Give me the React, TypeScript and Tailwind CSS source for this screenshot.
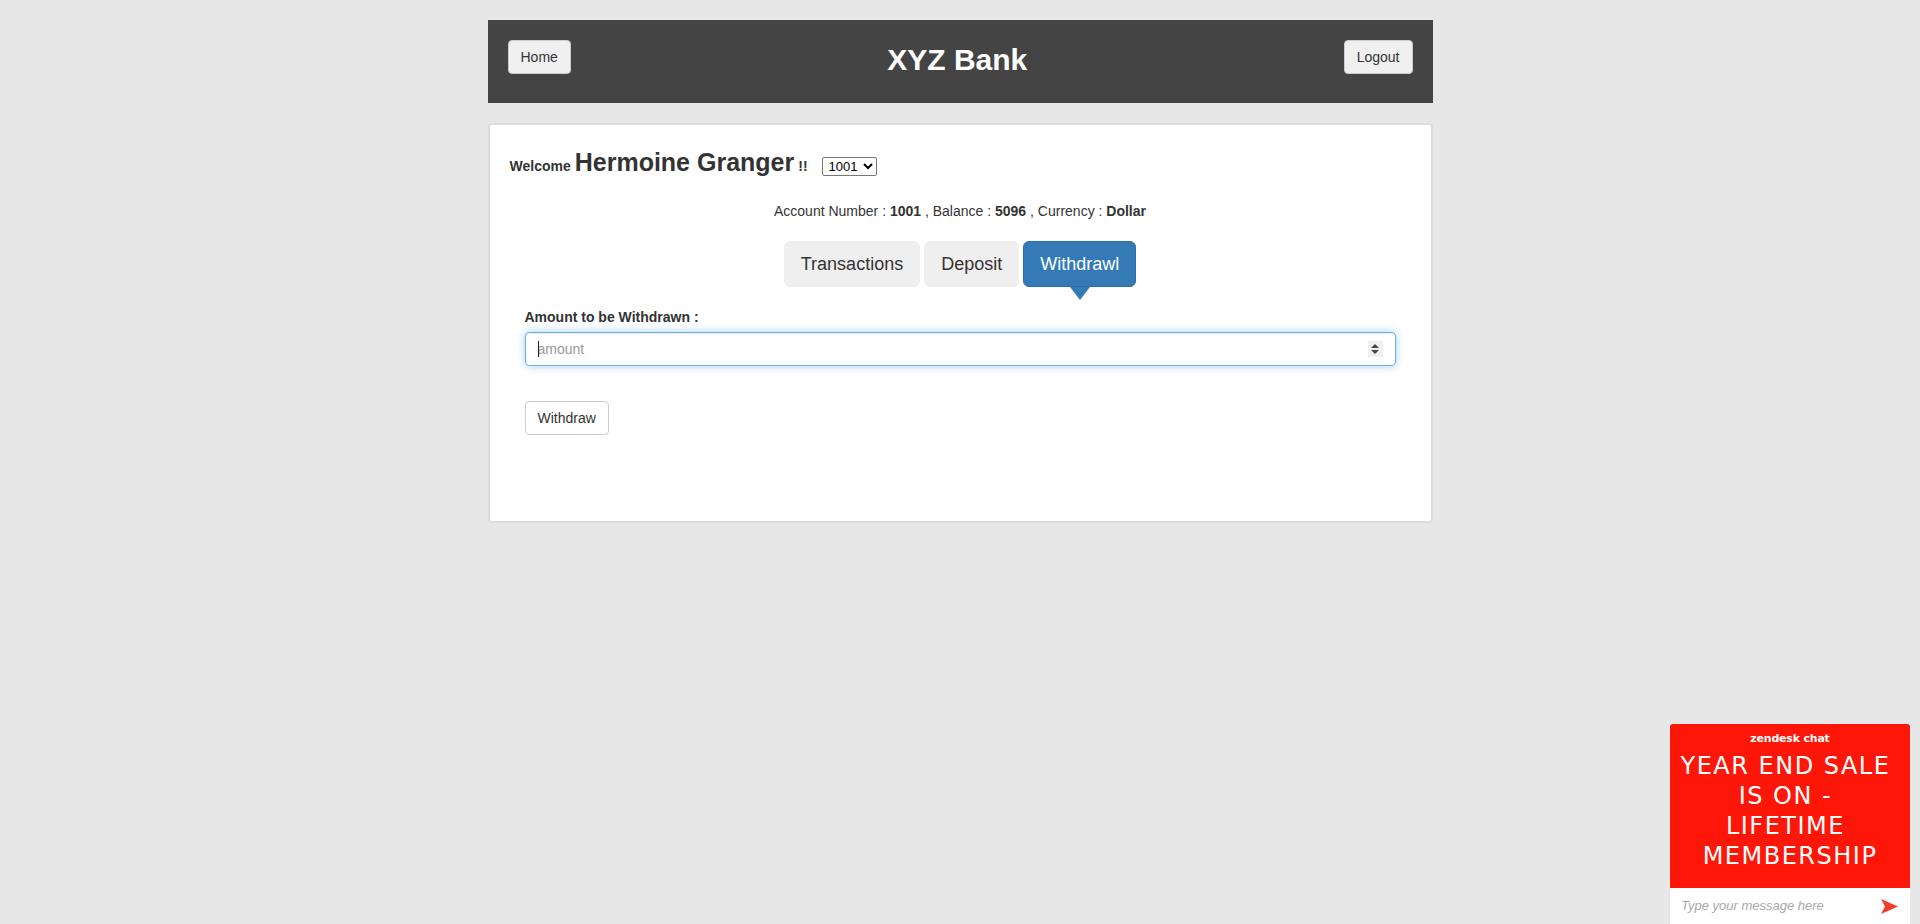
import { useState } from "react";

const TABS = ["Transactions", "Deposit", "Withdrawl"];

export default function App() {
  const [account, setAccount] = useState("1001");
  const [tab, setTab] = useState("Withdrawl");

  return (
    <div className="min-h-[924px] bg-[#e7e7e7] pt-5 font-['Liberation_Sans',Arial,sans-serif] text-[14px] text-[#333]">
      <div className="mx-auto w-[945px]">
        {/* Header */}
        <div className="flex h-[83px] items-start bg-[#444] px-5 pt-5">
          <button className="h-[34px] rounded-[4px] border border-[#ccc] bg-[#f0f0f0] px-3 text-[14px] text-[#333]">
            Home
          </button>
          <div className="mt-[3px] flex-1 text-center text-[30px] font-bold leading-[33px] text-white">
            XYZ Bank
          </div>
          <button className="h-[34px] rounded-[4px] border border-[#ccc] bg-[#f0f0f0] px-3 text-[14px] text-[#333]">
            Logout
          </button>
        </div>

        {/* Account card */}
        <div className="mt-5 rounded-[4px] border-2 border-[#dcdcdc] bg-white pb-[86px] pt-6">
          <div className="flex items-baseline pl-5">
            <strong className="text-[14px]">Welcome</strong>
            <span className="ml-1 text-[25px] font-bold leading-[26px]">Hermoine Granger</span>
            <strong className="ml-1 text-[14px]">!!</strong>
            <select
              value={account}
              onChange={(e) => setAccount(e.target.value)}
              className="ml-[14px] h-[19px] w-[55px] rounded-[2px] border border-[#767676] bg-white px-[2px] text-[13px] leading-[17px] text-black"
            >
              <option>1001</option>
              <option>1002</option>
              <option>1003</option>
            </select>
          </div>

          <div className="mt-6 text-center leading-5">
            Account Number : <strong>{account}</strong> , Balance : <strong>5096</strong> , Currency :{" "}
            <strong>Dollar</strong>
          </div>

          <div className="mt-5 flex justify-center gap-1">
            {TABS.map((t) => (
              <div key={t} className="relative">
                <button
                  onClick={() => setTab(t)}
                  className={
                    tab === t
                      ? "h-[46px] rounded-[6px] border border-[#2e6da4] bg-[#337ab7] px-4 text-[18px] text-white"
                      : "h-[46px] rounded-[6px] border border-[#efefef] bg-[#efefef] px-4 text-[18px] text-[#333]"
                  }
                >
                  {t}
                </button>
                {tab === t && (
                  <div className="absolute left-1/2 top-full h-0 w-0 -translate-x-1/2 border-l-[10px] border-r-[10px] border-t-[13px] border-l-transparent border-r-transparent border-t-[#337ab7]" />
                )}
              </div>
            ))}
          </div>

          {/* Withdraw form */}
          <div className="mt-5 px-[35px]">
            <label className="mb-[5px] block font-bold leading-5">Amount to be Withdrawn :</label>
            <div className="relative">
              <input
                type="text"
                placeholder="amount"
                className="h-[34px] w-full rounded-[4px] border border-[#66afe9] px-3 text-[14px] text-[#555] shadow-[inset_0_1px_1px_rgba(0,0,0,0.075),0_0_8px_rgba(102,175,233,0.6)] outline-none placeholder:text-[#999]"
              />
              <span className="pointer-events-none absolute left-[13px] top-[9px] h-4 w-px bg-[#222]" />
              <div className="pointer-events-none absolute right-[13px] top-[9px] flex h-4 w-[15px] flex-col items-center justify-center gap-[2px] bg-[#f0f0f0]">
                <div className="h-0 w-0 border-b-[4px] border-l-[4px] border-r-[4px] border-b-[#444] border-l-transparent border-r-transparent" />
                <div className="h-0 w-0 border-l-[4px] border-r-[4px] border-t-[4px] border-l-transparent border-r-transparent border-t-[#444]" />
              </div>
            </div>
            <button className="mt-[35px] h-[34px] rounded-[4px] border border-[#ccc] bg-white px-3 text-[14px] text-[#333]">
              Withdraw
            </button>
          </div>
        </div>
      </div>

      {/* Chat widget */}
      <div className="fixed bottom-0 right-[10px] w-[240px] overflow-hidden rounded-t-[3px] font-['DejaVu_Sans',Verdana,sans-serif]">
        <div className="h-[164px] bg-[#fe1708] pt-[8px] text-center text-white">
          <div className="text-[11px] font-bold leading-[14px] tracking-[-0.2px]">zendesk chat</div>
          <div className="mt-[5px] text-[24px] leading-[30px] tracking-[1.5px]">
            <div>YEAR END SALE&nbsp;</div>
            <div>IS ON -&nbsp;</div>
            <div>LIFETIME&nbsp;</div>
            <div>MEMBERSHIP</div>
          </div>
        </div>
        <div className="flex h-[36px] items-center justify-between bg-white pl-[11px] pr-[12px]">
          <span className="font-['Liberation_Sans',Arial,sans-serif] text-[13px] italic text-[#a8a8a8]">
            Type your message here
          </span>
          <svg width="17" height="15" viewBox="0 0 17 15">
            <path d="M0 0 L17 7.5 L0 15 L4 7.5 Z" fill="#f33b2e" />
          </svg>
        </div>
      </div>
    </div>
  );
}
